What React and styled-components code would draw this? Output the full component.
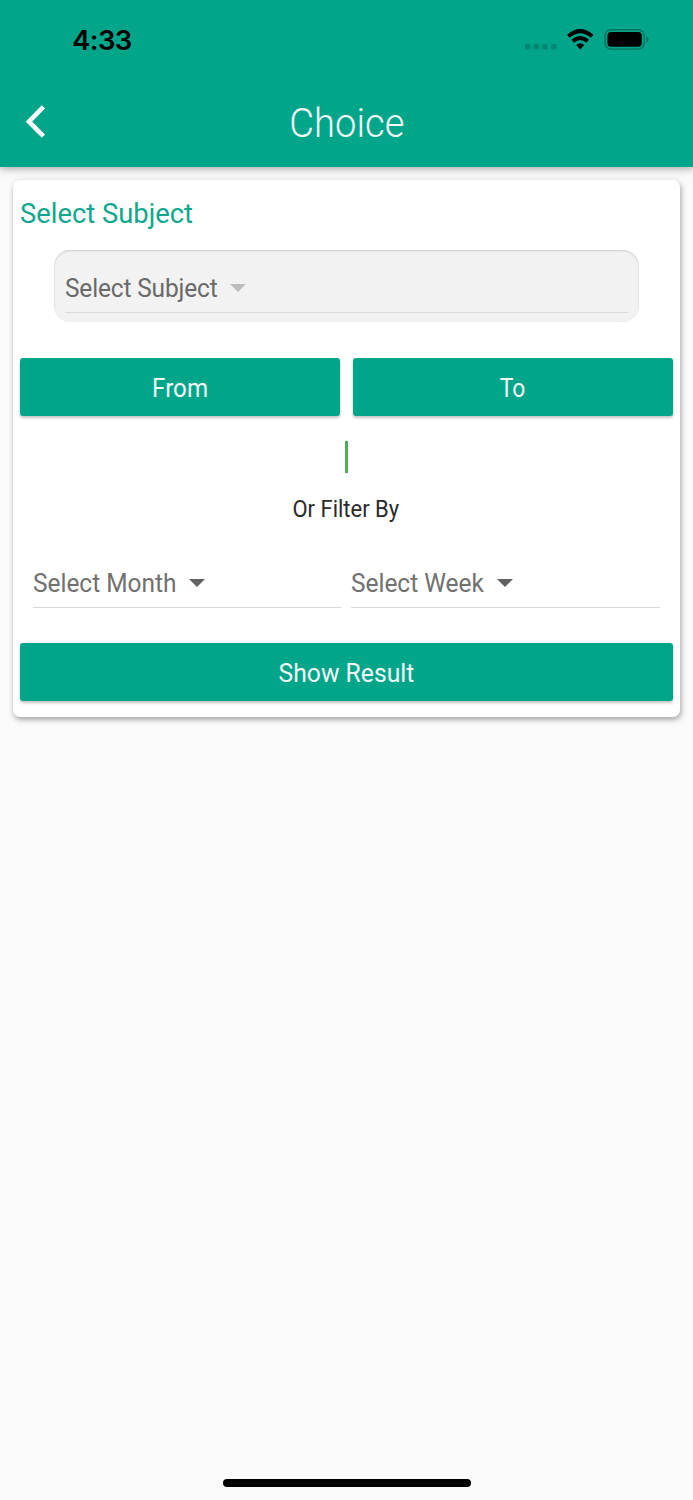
import styled, { createGlobalStyle } from 'styled-components';

const GlobalStyle = createGlobalStyle`
  * {
    box-sizing: border-box;
  }

  body {
    margin: 0;
    background: #fafafa;
    font-family: Roboto, "Liberation Sans", sans-serif;
    font-weight: 400;
  }
`;

const Screen = styled.div`
  width: 693px;
  height: 1500px;
  display: flex;
  flex-direction: column;
  background: #fafafa;
  overflow: hidden;
`;

const Header = styled.header`
  height: 167px;
  background: #01a58a;
  box-shadow: 0 2px 6px rgb(0 0 0 / 24%), 0 4px 10px rgb(0 0 0 / 8%);
`;

const StatusBar = styled.div`
  height: 78px;
  padding: 2px 44px 0 72px;
  display: flex;
  align-items: center;
  justify-content: space-between;
`;

const Time = styled.span`
  font-family: Inter, sans-serif;
  font-size: 27.5px;
  font-weight: 600;
  line-height: 34px;
  letter-spacing: -0.6px;
  color: #000;
`;

const StatusIcons = styled.svg`
  width: 124px;
  height: 24px;
  display: block;
`;

const AppBar = styled.div`
  height: 89px;
  display: grid;
  grid-template-columns: 72px 1fr 72px;
  align-items: center;
`;

const BackButton = styled.button`
  height: 89px;
  padding: 0 0 2px 26px;
  border: 0;
  background: none;
  display: flex;
  align-items: center;
`;

// Slightly condensed lettering
const Label = styled.span`
  display: inline-block;
  transform: scaleX(${({ $scale = 0.945 }) => $scale});
  transform-origin: ${({ $origin = 'center' }) => $origin};
`;

const Title = styled.h1`
  margin: 0;
  text-align: center;
  font-size: 41px;
  font-weight: 300;
  line-height: 48px;
  color: #f4fcfa;
`;

const Card = styled.main`
  height: 537px;
  margin: 13px 13px 0;
  padding: 0 7px 0 6.5px;
  border-radius: 7px;
  background: #fff;
  box-shadow: 1px 3px 5px rgb(0 0 0 / 26%), 1px 1px 7px rgb(0 0 0 / 12%);
`;

const Heading = styled.h2`
  margin: 0;
  height: 70px;
  line-height: 68px;
  font-size: 28.5px;
  font-weight: 400;
  color: #0ea78d;
`;

const SubjectBox = styled.div`
  height: 72px;
  margin: 0 34px;
  padding: 13px 11px 9px;
  border-radius: 16px;
  background: #f2f2f2;
  box-shadow: inset 0 1px 2px rgb(0 0 0 / 14%), inset 0 0 2px rgb(0 0 0 / 5%);
`;

const SelectField = styled.div`
  flex: 1;
  height: 50px;
  display: flex;
  align-items: center;
  gap: 4px;
  border-bottom: 1px solid #d9d9d9;
  font-size: 26px;
  line-height: 48px;
  color: #707070;
  white-space: nowrap;
`;

const Arrow = styled.span`
  width: 0;
  height: 0;
  border: 8px solid transparent;
  border-top-color: ${({ $color }) => $color};
  border-bottom: 0;
`;

const ButtonRow = styled.div`
  display: flex;
  gap: 13px;
  margin-top: ${({ $top }) => $top}px;
`;

const Button = styled.button`
  flex: 1;
  height: 58px;
  padding: 2px 0 0;
  border: 0;
  border-radius: 3px;
  background: #01a58a;
  box-shadow: 0 2px 3px rgb(0 0 0 / 24%);
  color: #f4fcfa;
  font-family: inherit;
  font-size: 26px;
  font-weight: 400;
`;

const Divider = styled.div`
  width: 3px;
  height: 32px;
  margin: 25px auto 0;
  background: #4caf50;
`;

const FilterLabel = styled.p`
  margin: 21px 0 0;
  text-align: center;
  font-size: 23px;
  line-height: 32px;
  color: #2a2a2a;
`;

const FilterRow = styled.div`
  display: flex;
  gap: 10px;
  margin-top: 32px;
  padding: 0 13px;
`;

const HomeIndicator = styled.div`
  width: 248px;
  height: 8px;
  margin: auto auto 13px;
  border-radius: 4px;
  background: #000;
`;

const SubjectSelectField = styled(SelectField)`
  gap: 3px;
  letter-spacing: -0.15px;
  color: #696969;
`;

const Select = ({ as: Field = SelectField, label, arrowColor = '#616161' }) => (
  <Field>
    <Label $scale={0.94} $origin="left">{label}</Label>
    <Arrow $color={arrowColor} />
  </Field>
);

const DeviceStatus = () => (
  <StatusIcons viewBox="0 0 124 24">
    <g fill="#018670">
      <rect x="0" y="16" width="5.4" height="5.4" rx="1.6" />
      <rect x="8.7" y="16" width="5.4" height="5.4" rx="1.6" />
      <rect x="17.3" y="16" width="5.4" height="5.4" rx="1.6" />
      <rect x="26" y="16" width="5.4" height="5.4" rx="1.6" />
    </g>
    <g fill="none" stroke="#000" strokeWidth="4">
      <path d="M43.3 8.2Q55.2 -2 67.1 8.2" />
      <path d="M47.8 13.2Q55.2 6.8 62.6 13.2" />
    </g>
    <path d="M51.2 17.1Q55.2 13.4 59.2 17.1L55.2 21.4Z" fill="#000" />
    <rect x="80" y="1.7" width="39.2" height="19.4" rx="6" fill="none" stroke="#01735f" strokeWidth="1.4" />
    <rect x="82.4" y="4" width="34.4" height="14.8" rx="3.8" fill="#000" />
    <path d="M121.4 8.3Q123.6 9.2 123.6 11.5Q123.6 13.8 121.4 14.6Z" fill="#01735f" />
  </StatusIcons>
);

const App = () => (
  <>
    <GlobalStyle />
    <Screen>
      <Header>
        <StatusBar>
          <Time>4:33</Time>
          <DeviceStatus />
        </StatusBar>
        <AppBar>
          <BackButton aria-label="Back">
            <svg width="20" height="33" viewBox="0 0 20 33">
              <path d="M17.4 1.8L2.9 16.6L17.4 31.2" fill="none" stroke="#fff" strokeWidth="4.6" />
            </svg>
          </BackButton>
          <Title>
            <Label $scale={0.93}>Choice</Label>
          </Title>
        </AppBar>
      </Header>
      <Card>
        <Heading>
          <Label $scale={0.96} $origin="left">Select Subject</Label>
        </Heading>
        <SubjectBox>
          <Select as={SubjectSelectField} label="Select Subject" arrowColor="#bdbdbd" />
        </SubjectBox>
        <ButtonRow $top={36}>
          <Button>
            <Label $scale={0.93}>From</Label>
          </Button>
          <Button>
            <Label $scale={0.88}>To</Label>
          </Button>
        </ButtonRow>
        <Divider />
        <FilterLabel>
          <Label $scale={0.955}>Or Filter By</Label>
        </FilterLabel>
        <FilterRow>
          <Select label="Select Month" />
          <Select label="Select Week" />
        </FilterRow>
        <ButtonRow $top={35}>
          <Button>
            <Label $scale={0.95}>Show Result</Label>
          </Button>
        </ButtonRow>
      </Card>
      <HomeIndicator />
    </Screen>
  </>
);

export default App;
